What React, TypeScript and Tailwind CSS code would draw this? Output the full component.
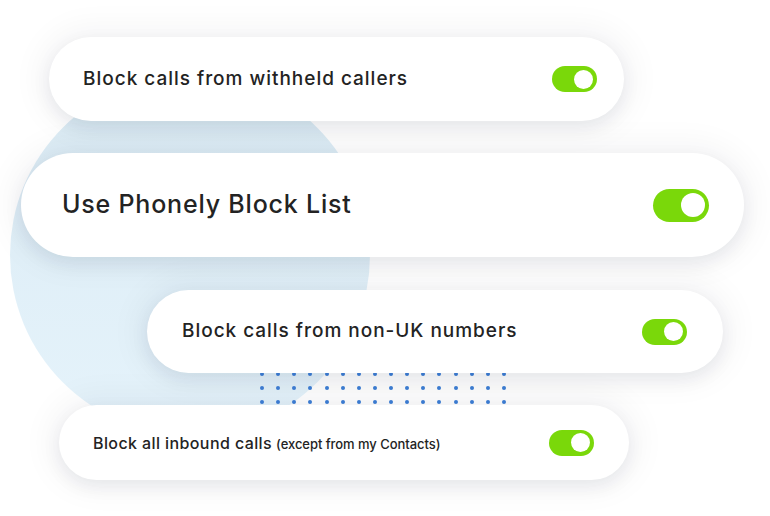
import React from "react";

const font = { fontFamily: "Inter, 'Liberation Sans', sans-serif" };

function Toggle({ big = false }: { big?: boolean }) {
  return big ? (
    <div className="flex h-[33px] w-[56px] items-center justify-end rounded-full bg-[#7ad80a] pr-[4px]">
      <div className="h-[24px] w-[24px] rounded-full bg-white" />
    </div>
  ) : (
    <div className="flex h-[26px] w-[45px] items-center justify-end rounded-full bg-[#7ad80a] pr-[4px]">
      <div className="h-[19px] w-[19px] rounded-full bg-white" />
    </div>
  );
}

const shadow =
  "shadow-[0_6px_18px_rgba(20,30,50,0.075),0_0_30px_12px_rgba(20,30,50,0.04)]";

export default function App() {
  const rows = [0, 1, 2, 3];
  const cols = Array.from({ length: 16 }, (_, i) => i);
  return (
    <div className="relative h-[516px] w-[770px] overflow-hidden bg-white" style={font}>
      {/* background circle */}
      <div className="absolute left-[10px] top-[75px] h-[360px] w-[360px] rounded-full bg-gradient-to-b from-[#dbebf4] to-[#e5f3fb]" />
      {/* dot grid */}
      <div className="absolute left-[254px] top-[353px] grid grid-cols-[repeat(16,16.13px)] grid-rows-[repeat(4,14px)]">
        {rows.map((r) =>
          cols.map((c) => (
            <div key={`${r}-${c}`} className="flex items-center justify-center">
              <div className="h-[4px] w-[4px] rounded-full bg-[#3e80d8]" />
            </div>
          ))
        )}
      </div>

      <div className="relative flex flex-col text-[#232323]">
        <div
          className={`ml-[49px] mt-[37px] flex h-[84px] w-[575px] items-center justify-between rounded-full bg-white pl-[34px] pr-[27px] ${shadow}`}
        >
          <span className="text-[19px] font-medium tracking-[0.98px]">Block calls from withheld callers</span>
          <Toggle />
        </div>

        <div
          className={`ml-[21px] mt-[32px] flex h-[104px] w-[723px] items-center justify-between rounded-full bg-white pl-[41px] pr-[35px] ${shadow}`}
        >
          <span className="text-[25px] font-medium tracking-[0.8px]">Use Phonely Block List</span>
          <Toggle big />
        </div>

        <div
          className={`ml-[147px] mt-[33px] flex h-[83px] w-[576px] items-center justify-between rounded-full bg-white pl-[35px] pr-[36px] ${shadow}`}
        >
          <span className="text-[19px] font-medium tracking-[0.97px]">Block calls from non-UK numbers</span>
          <Toggle />
        </div>

        <div
          className={`ml-[59px] mt-[32px] flex h-[75px] w-[570px] items-center justify-between rounded-full bg-white pl-[34px] pr-[35px] ${shadow}`}
        >
          <span className="flex items-baseline">
            <span className="text-[16px] font-medium tracking-[0.4px]">Block all inbound calls</span>
            <span className="ml-[4px] text-[13px] font-medium tracking-[-0.05px]">(except from my Contacts)</span>
          </span>
          <Toggle />
        </div>
      </div>
    </div>
  );
}
